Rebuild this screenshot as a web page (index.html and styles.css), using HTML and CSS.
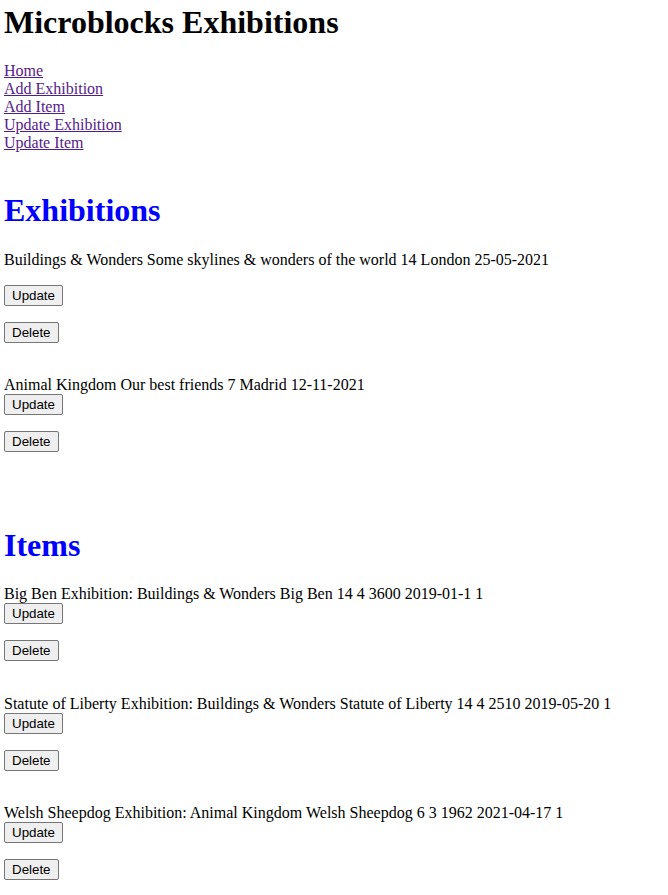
FILE: index.html
```html
<!DOCTYPE html>
<html lang="en">
<head>
<meta charset="utf-8">
<title>Microblocks Exhibitions</title>
<link rel="stylesheet" href="styles.css">
</head>
<body>
<h1 class="title">Microblocks Exhibitions</h1>
<nav class="nav">
  <a href="#">Home</a>
  <a href="#">Add Exhibition</a>
  <a href="#">Add Item</a>
  <a href="#">Update Exhibition</a>
  <a href="#">Update Item</a>
</nav>

<h1 class="section">Exhibitions</h1>
<div class="entry">
  <p class="info info-spaced">Buildings &amp; Wonders Some skylines &amp; wonders of the world 14 London 25-05-2021</p>
  <form class="action"><button type="button" class="btn">Update</button></form>
  <form class="action"><button type="button" class="btn">Delete</button></form>
</div>
<div class="entry entry-last">
  <div class="info">Animal Kingdom Our best friends 7 Madrid 12-11-2021</div>
  <form class="action"><button type="button" class="btn">Update</button></form>
  <form class="action"><button type="button" class="btn">Delete</button></form>
</div>

<h1 class="section">Items</h1>
<div class="entry">
  <div class="info">Big Ben Exhibition: Buildings &amp; Wonders Big Ben 14 4 3600 2019-01-1 1</div>
  <form class="action"><button type="button" class="btn">Update</button></form>
  <form class="action"><button type="button" class="btn">Delete</button></form>
</div>
<div class="entry">
  <div class="info">Statute of Liberty Exhibition: Buildings &amp; Wonders Statute of Liberty 14 4 2510 2019-05-20 1</div>
  <form class="action"><button type="button" class="btn">Update</button></form>
  <form class="action"><button type="button" class="btn">Delete</button></form>
</div>
<div class="entry">
  <div class="info">Welsh Sheepdog Exhibition: Animal Kingdom Welsh Sheepdog 6 3 1962 2021-04-17 1</div>
  <form class="action"><button type="button" class="btn">Update</button></form>
  <form class="action"><button type="button" class="btn">Delete</button></form>
</div>
</body>
</html>
```

FILE: styles.css
```css
html {
  background: #ffffff;
}

body {
  margin: 4px;
  font-family: "Liberation Serif", "Times New Roman", serif;
  font-size: 16px;
  color: #000000;
}

.title {
  font-size: 32px;
  font-weight: bold;
  margin: 0 0 21.44px;
}

.nav {
  display: flex;
  flex-direction: column;
  align-items: flex-start;
  padding-bottom: 18.4px;
}

.nav a {
  color: #551a8b;
  text-decoration: underline;
}

.section {
  font-size: 32px;
  font-weight: bold;
  color: #0000ff;
  margin: 21.44px 0;
}

.entry {
  padding-bottom: 17.6px;
}

.entry-last {
  padding-bottom: 37px;
}

.info {
  margin: 0;
}

.info-spaced {
  margin-bottom: 16px;
}

.action {
  margin: 0 0 16px;
}

.btn {
  display: block;
  box-sizing: border-box;
  height: 21px;
  font-family: "Liberation Sans", Arial, sans-serif;
  font-size: 13.333px;
  line-height: 15px;
  color: #000000;
  background: #efefef;
  border: 1px solid #767676;
  border-radius: 2px;
  padding: 2px 7px;
  margin: 0;
}
```
